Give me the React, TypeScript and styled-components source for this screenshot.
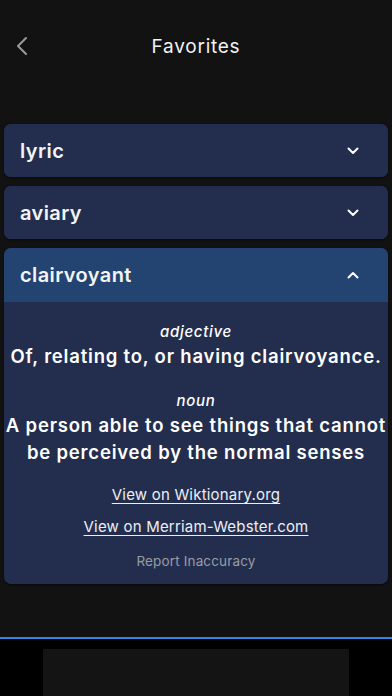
import React, { useState } from "react";
import styled, { createGlobalStyle } from "styled-components";

const Global = createGlobalStyle`
  html, body { margin: 0; padding: 0; background: #121212; }
  body { font-family: Inter, "Noto Sans", sans-serif; -webkit-font-smoothing: antialiased; }
  * { box-sizing: border-box; }
`;

const Screen = styled.div`
  width: 392px;
  height: 696px;
  display: flex;
  flex-direction: column;
  background: #121212;
  overflow: hidden;
`;

const NavBar = styled.div`
  height: 92px;
  display: flex;
  align-items: center;
  justify-content: center;
  position: relative;
  flex-shrink: 0;
`;

const BackButton = styled.button`
  position: absolute;
  left: 14px;
  top: 36px;
  width: 16px;
  height: 20px;
  padding: 0;
  border: 0;
  background: none;
  display: flex;
  align-items: center;
  justify-content: center;
`;

const Title = styled.h1`
  margin: 0;
  font-size: 19px;
  font-weight: 400;
  color: #f2f2f2;
  letter-spacing: 0.75px;
`;

const Content = styled.div`
  flex: 1;
  display: flex;
  flex-direction: column;
  gap: 9px;
  padding: 32px 4px 0;
`;

const Card = styled.div`
  border-radius: 7px;
  background: #232e4e;
  overflow: hidden;
  box-shadow: 0 1px 2px rgba(0, 0, 0, 0.5);
`;

const CardHeader = styled.div<{ $open: boolean }>`
  height: ${(p) => (p.$open ? 54 : 53)}px;
  display: flex;
  align-items: center;
  justify-content: space-between;
  padding: 0 29px 0 16px;
  background: ${(p) => (p.$open ? "#234370" : "#232e4e")};
  cursor: pointer;
`;

const Word = styled.span`
  font-size: 20px;
  font-weight: 600;
  color: #f4f4f6;
  letter-spacing: 0.4px;
`;

const Body = styled.div`
  display: flex;
  flex-direction: column;
  align-items: center;
  text-align: center;
  padding: 19px 0 13px;
  color: #ffffff;
`;

const Pos = styled.div<{ $gap?: number }>`
  font-size: 15px;
  font-style: italic;
  font-weight: 500;
  line-height: 22px;
  margin-top: ${(p) => p.$gap ?? 0}px;
  letter-spacing: 0.7px;
`;

const Definition = styled.div`
  font-size: 18.5px;
  font-weight: 600;
  line-height: 27px;
  letter-spacing: 0.8px;
  white-space: nowrap;
`;

const LinkText = styled.a<{ $gap: number }>`
  font-size: 15px;
  line-height: 24px;
  color: #eceef4;
  text-decoration: underline;
  text-underline-offset: 3px;
  margin-top: ${(p) => p.$gap}px;
  letter-spacing: 0.2px;
`;

const Report = styled.div`
  font-size: 13.5px;
  line-height: 20px;
  color: #9a9ca4;
  margin-top: 12px;
  letter-spacing: 0.15px;
`;

const BottomBar = styled.div`
  height: 59px;
  flex-shrink: 0;
  border-top: 2px solid #2a8be2;
  background: #000;
  display: flex;
  justify-content: center;
  padding-top: 10px;
`;

const AdSlot = styled.div`
  width: 306px;
  height: 100%;
  background: #141414;
`;

const Chevron = ({ up }: { up: boolean }) => (
  <svg width="12" height="8" viewBox="0 0 12 8">
    <path
      d={up ? "M1.5 6.5 L6 2 L10.5 6.5" : "M1.5 1.5 L6 6 L10.5 1.5"}
      fill="none"
      stroke="#ffffff"
      strokeWidth="2"
      strokeLinecap="round"
      strokeLinejoin="round"
    />
  </svg>
);

const words = ["lyric", "aviary", "clairvoyant"];

export default function App() {
  const [open, setOpen] = useState("clairvoyant");
  return (
    <Screen>
      <Global />
      <NavBar>
        <BackButton aria-label="Back">
          <svg width="12" height="20" viewBox="0 0 12 20">
            <path d="M10 2 L2 10 L10 18" fill="none" stroke="#9a9a9a" strokeWidth="2" strokeLinecap="round" strokeLinejoin="round" />
          </svg>
        </BackButton>
        <Title>Favorites</Title>
      </NavBar>
      <Content>
        {words.map((w) => {
          const isOpen = open === w;
          return (
            <Card key={w}>
              <CardHeader $open={isOpen} onClick={() => setOpen(isOpen ? "" : w)}>
                <Word>{w}</Word>
                <Chevron up={isOpen} />
              </CardHeader>
              {isOpen && (
                <Body>
                  <Pos>adjective</Pos>
                  <Definition>Of, relating to, or having clairvoyance.</Definition>
                  <Pos $gap={20}>noun</Pos>
                  <Definition>
                    A person able to see things that cannot
                    <br />
                    be perceived by the normal senses
                  </Definition>
                  <LinkText $gap={17}>View on Wiktionary.org</LinkText>
                  <LinkText $gap={8}>View on Merriam-Webster.com</LinkText>
                  <Report>Report Inaccuracy</Report>
                </Body>
              )}
            </Card>
          );
        })}
      </Content>
      <BottomBar>
        <AdSlot />
      </BottomBar>
    </Screen>
  );
}
